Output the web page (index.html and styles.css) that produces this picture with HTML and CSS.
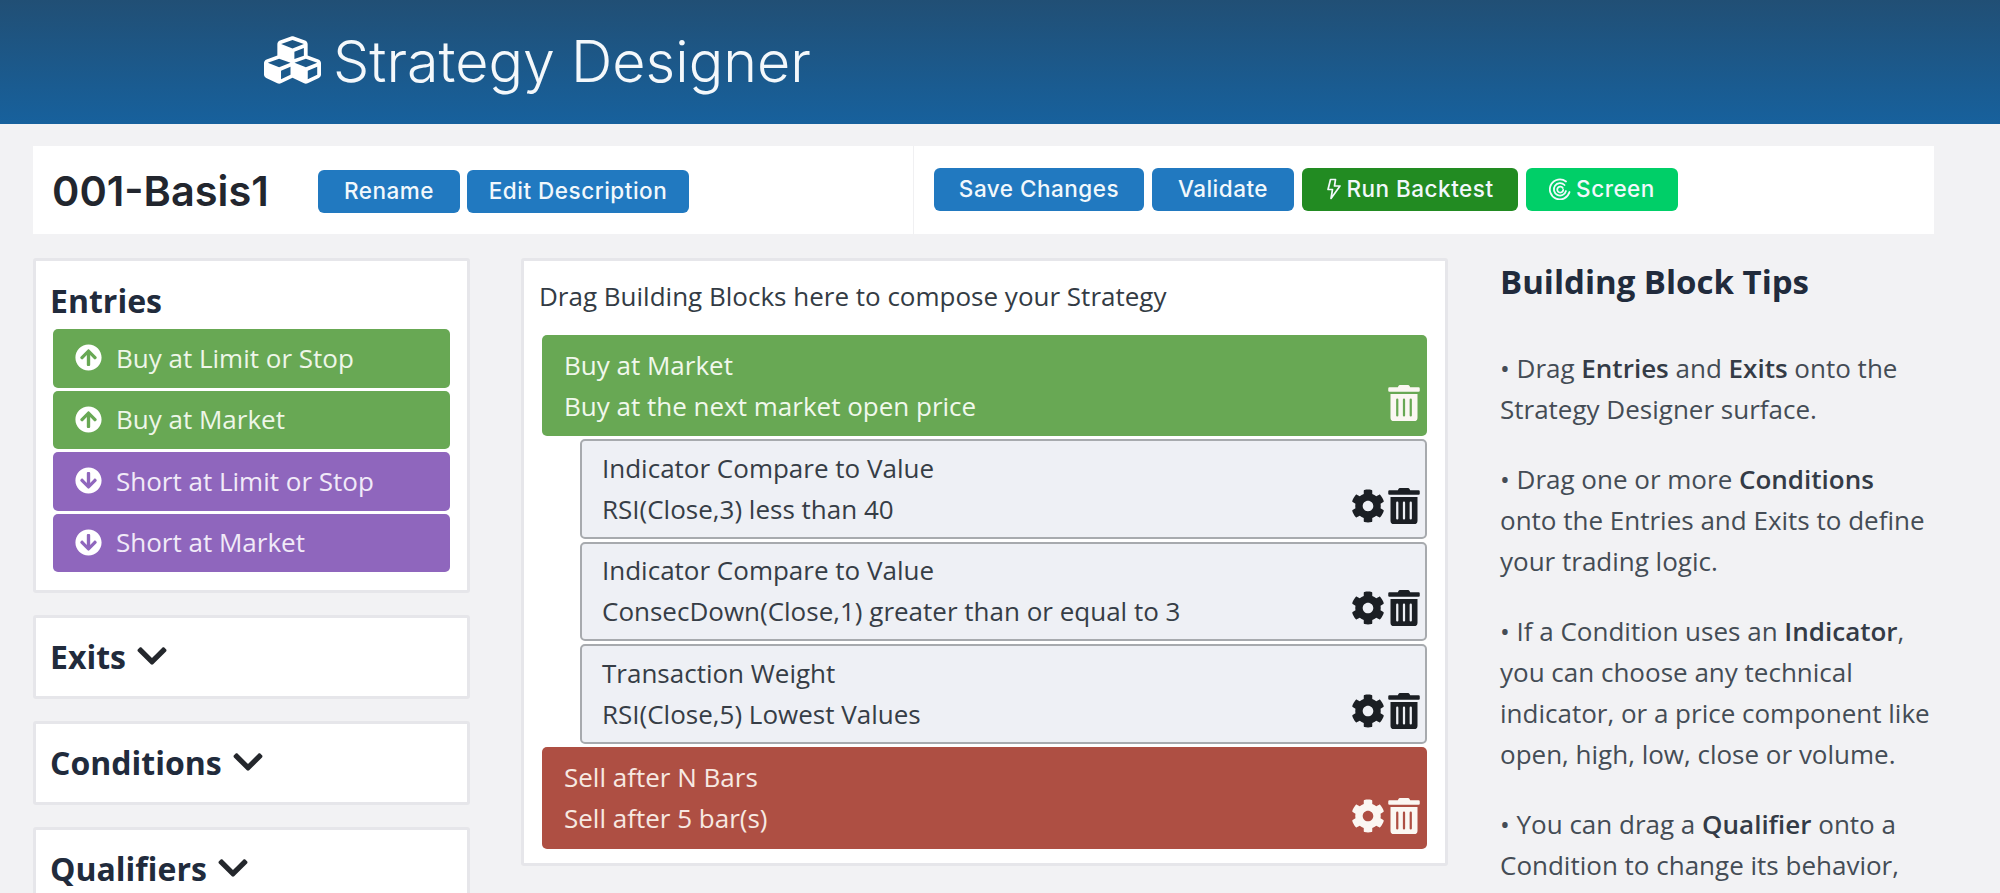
FILE: index.html
```html
<!DOCTYPE html>
<html lang="en">
<head>
<meta charset="utf-8">
<title>Strategy Designer</title>
<link rel="stylesheet" href="styles.css">
</head>
<body>
<svg class="defs" aria-hidden="true">
<symbol id="trash" viewBox="0 0 448 512"><path fill="currentColor" d="M32 464a48 48 0 0 0 48 48h288a48 48 0 0 0 48-48V128H32zm272-256a16 16 0 0 1 32 0v224a16 16 0 0 1-32 0zm-96 0a16 16 0 0 1 32 0v224a16 16 0 0 1-32 0zm-96 0a16 16 0 0 1 32 0v224a16 16 0 0 1-32 0zM432 32H312l-9.4-18.7A24 24 0 0 0 281.1 0H166.8a23.72 23.72 0 0 0-21.4 13.3L136 32H16A16 16 0 0 0 0 48v32a16 16 0 0 0 16 16h416a16 16 0 0 0 16-16V48a16 16 0 0 0-16-16z"/></symbol>
<symbol id="cog" viewBox="0 0 512 512"><path fill="currentColor" d="M487.4 315.7l-42.6-24.6c4.3-23.2 4.3-47 0-70.2l42.6-24.6c4.9-2.8 7.1-8.6 5.5-14-11.1-35.6-30-67.8-54.7-94.6-3.8-4.1-10-5.1-14.8-2.3L380.8 110c-17.9-15.4-38.5-27.3-60.8-35.1V25.8c0-5.6-3.9-10.5-9.4-11.7-36.7-8.2-74.3-7.8-109.2 0-5.5 1.2-9.4 6.1-9.4 11.7V75c-22.2 7.9-42.8 19.8-60.8 35.1L88.7 85.5c-4.9-2.8-11-1.9-14.8 2.3-24.7 26.7-43.6 58.9-54.7 94.6-1.7 5.4.6 11.2 5.5 14L67.3 221c-4.3 23.2-4.3 47 0 70.2l-42.6 24.6c-4.9 2.8-7.1 8.6-5.5 14 11.1 35.6 30 67.8 54.7 94.6 3.8 4.1 10 5.1 14.8 2.3l42.6-24.6c17.9 15.4 38.5 27.3 60.8 35.1v49.2c0 5.6 3.9 10.5 9.4 11.7 36.7 8.2 74.3 7.8 109.2 0 5.5-1.2 9.4-6.1 9.4-11.7v-49.2c22.2-7.9 42.8-19.8 60.8-35.1l42.6 24.6c4.9 2.8 11 1.9 14.8-2.3 24.7-26.7 43.6-58.9 54.7-94.6 1.5-5.5-.7-11.3-5.6-14.1zM256 336c-44.1 0-80-35.9-80-80s35.9-80 80-80 80 35.9 80 80-35.9 80-80 80z"/></symbol>
<symbol id="up" viewBox="0 0 512 512"><path fill="currentColor" d="M8 256C8 119 119 8 256 8s248 111 248 248-111 248-248 248S8 393 8 256zm143.6 28.9l72.4-75.5V392c0 13.3 10.7 24 24 24h16c13.3 0 24-10.7 24-24V209.4l72.4 75.5c9.3 9.7 24.8 9.9 34.3.4l10.9-11c9.4-9.4 9.4-24.6 0-33.9L273 107.7c-9.4-9.4-24.6-9.4-33.9 0L106.3 240.4c-9.4 9.4-9.4 24.6 0 33.9l10.9 11c9.6 9.5 25.1 9.3 34.4-.4z"/></symbol>
<symbol id="chev" viewBox="0 0 448 512"><path fill="currentColor" d="M207.029 381.476L12.686 187.132c-9.373-9.373-9.373-24.569 0-33.941l22.667-22.667c9.357-9.357 24.522-9.375 33.901-.04L224 284.505l154.745-154.021c9.379-9.335 24.544-9.317 33.901.04l22.667 22.667c9.373 9.373 9.373 24.569 0 33.941L240.971 381.476c-9.373 9.372-24.569 9.372-33.942 0z"/></symbol>
</svg>

<header class="masthead">
  <svg class="logo" viewBox="0 0 512 512" preserveAspectRatio="none"><path fill="currentColor" d="M488.6 250.2L392 214V105.5c0-15-9.3-28.4-23.4-33.7l-100-37.5c-8.1-3.1-17.1-3.1-25.3 0l-100 37.5c-14.1 5.3-23.4 18.7-23.4 33.7V214l-96.6 36.2C9.3 255.5 0 268.9 0 283.9V394c0 13.6 7.7 26.1 19.9 32.2l100 50c10.1 5.1 22.1 5.1 32.2 0l103.9-52 103.9 52c10.1 5.1 22.1 5.1 32.2 0l100-50c12.2-6.1 19.9-18.6 19.9-32.2V283.9c0-15-9.3-28.4-23.4-33.7zM358 214.8l-85 31.9v-68.2l85-37v73.3zM154 104.1l102-38.2 102 38.2v.6l-102 41.4-102-41.4v-.6zm84 291.1l-85 42.5v-79.1l85-38.8v75.4zm0-112l-102 41.4-102-41.4v-.6l102-38.2 102 38.2v.6zm240 112l-85 42.5v-79.1l85-38.8v75.4zm0-112l-102 41.4-102-41.4v-.6l102-38.2 102 38.2v.6z"/></svg>
  <h1 class="app-title">Strategy Designer</h1>
</header>

<main class="page">
  <section class="toolbar">
    <div class="toolbar-left">
      <h2 class="strategy-name">001-Basis1</h2>
      <div class="btn-row">
        <button class="btn btn-blue btn-rename">Rename</button>
        <button class="btn btn-blue btn-edit">Edit Description</button>
      </div>
    </div>
    <div class="toolbar-right">
      <button class="btn btn-blue btn-save">Save Changes</button>
      <button class="btn btn-blue btn-validate">Validate</button>
      <button class="btn btn-dark-green btn-run"><svg class="btn-icon" viewBox="0 0 16 22"><path d="M9.5 1.5H4.5L2 11.5h4.5L5 20.5 14 8H8.5z" fill="none" stroke="currentColor" stroke-width="1.7" stroke-linejoin="round"/></svg>Run Backtest</button>
      <button class="btn btn-bright-green btn-screen"><svg class="btn-icon btn-icon-screen" viewBox="0 0 22 22"><g fill="none" stroke="currentColor" stroke-width="1.8" stroke-linecap="round"><path d="M17 3.5A10 10 0 1 0 20.5 14"/><path d="M15.5 7A6.2 6.2 0 1 0 17 13"/><path d="M13.8 10A3 3 0 1 0 14.2 12"/></g></svg>Screen</button>
    </div>
  </section>

  <div class="workspace">
    <aside class="palette">
      <section class="card card-entries">
        <h3 class="card-title">Entries</h3>
        <ul class="block-list">
          <li class="block-item green"><svg class="item-icon"><use href="#up"/></svg>Buy at Limit or Stop</li>
          <li class="block-item green"><svg class="item-icon"><use href="#up"/></svg>Buy at Market</li>
          <li class="block-item purple"><svg class="item-icon flip"><use href="#up"/></svg>Short at Limit or Stop</li>
          <li class="block-item purple"><svg class="item-icon flip"><use href="#up"/></svg>Short at Market</li>
        </ul>
      </section>
      <section class="card card-collapsed"><h3 class="card-title">Exits <svg class="chevron"><use href="#chev"/></svg></h3></section>
      <section class="card card-collapsed"><h3 class="card-title">Conditions <svg class="chevron"><use href="#chev"/></svg></h3></section>
      <section class="card card-collapsed"><h3 class="card-title">Qualifiers <svg class="chevron"><use href="#chev"/></svg></h3></section>
    </aside>

    <section class="canvas">
      <p class="canvas-hint">Drag Building Blocks here to compose your Strategy</p>
      <div class="blocks">
        <article class="block block-entry">
          <div class="block-text"><div>Buy at Market</div><div>Buy at the next market open price</div></div>
          <div class="block-actions"><svg class="trash"><use href="#trash"/></svg></div>
        </article>
        <article class="block block-cond">
          <div class="block-text"><div>Indicator Compare to Value</div><div>RSI(Close,3) less than 40</div></div>
          <div class="block-actions"><svg class="cog"><use href="#cog"/></svg><svg class="trash"><use href="#trash"/></svg></div>
        </article>
        <article class="block block-cond">
          <div class="block-text"><div>Indicator Compare to Value</div><div>ConsecDown(Close,1) greater than or equal to 3</div></div>
          <div class="block-actions"><svg class="cog"><use href="#cog"/></svg><svg class="trash"><use href="#trash"/></svg></div>
        </article>
        <article class="block block-cond">
          <div class="block-text"><div>Transaction Weight</div><div>RSI(Close,5) Lowest Values</div></div>
          <div class="block-actions"><svg class="cog"><use href="#cog"/></svg><svg class="trash"><use href="#trash"/></svg></div>
        </article>
        <article class="block block-exit">
          <div class="block-text"><div>Sell after N Bars</div><div>Sell after 5 bar(s)</div></div>
          <div class="block-actions"><svg class="cog"><use href="#cog"/></svg><svg class="trash"><use href="#trash"/></svg></div>
        </article>
      </div>
    </section>

    <aside class="tips">
      <h3 class="tips-title">Building Block Tips</h3>
      <p>• Drag <b>Entries</b> and <b>Exits</b> onto the Strategy Designer surface.</p>
      <p>• Drag one or more <b>Conditions</b> onto the Entries and Exits to define your trading logic.</p>
      <p>• If a Condition uses an <b>Indicator</b>, you can choose any technical indicator, or a price component like open, high, low, close or volume.</p>
      <p>• You can drag a <b>Qualifier</b> onto a Condition to change its behavior,</p>
    </aside>
  </div>
</main>
</body>
</html>
```

FILE: styles.css
```css
* { box-sizing: border-box; }
html, body { margin: 0; height: 893px; overflow: hidden; }
body { background: #f2f2f4; color: #212b36; font-family: "Open Sans", "Liberation Sans", sans-serif; font-size: 26px; }
.defs { display: none; }
svg { display: block; flex: none; }

.masthead { height: 124px; background: linear-gradient(#214f75, #17619d); display: flex; align-items: center; padding: 0 0 0 264px; color: #fff; }
.logo { width: 57px; height: 54px; margin: 0 12px 5px 0; }
.app-title { margin: 0; font-family: "Inter", "Lato", sans-serif; font-weight: 300; font-size: 57.4px; line-height: 1; color: #f4f8fb; white-space: nowrap; }

.page { padding: 22px 0 0 33px; }
.toolbar { width: 1901px; height: 88px; background: #fff; display: flex; }
.toolbar-left { width: 881px; border-right: 1px solid #f0f0f2; display: flex; align-items: center; padding-left: 19px; padding-top: 3px; }
.strategy-name { margin: 0 47px 0 0; width: 219px; font-family: "Inter", "Lato", sans-serif; font-weight: 600; font-size: 41.5px; line-height: 1; color: #22262e; white-space: nowrap; }
.btn-row { display: flex; gap: 7px; }
.toolbar-right { display: flex; gap: 8px; align-items: center; padding: 0 0 1px 20px; }
.btn { height: 43px; border: 0; border-radius: 6px; padding: 0 0 2px; color: #f2f8fc; font-family: "Inter", "Lato", sans-serif; font-weight: 500; font-size: 22.5px; letter-spacing: 0.5px; display: flex; align-items: center; justify-content: center; white-space: nowrap; }
.btn-blue { background: #2179c0; }
.btn-dark-green { background: #228b22; }
.btn-bright-green { background: #00cf68; }
.btn-rename { width: 142px; }
.btn-edit { width: 222px; }
.btn-save { width: 210px; }
.btn-validate { width: 142px; }
.btn-run { width: 216px; }
.btn-screen { width: 152px; }
.btn-icon { width: 16px; height: 22px; margin-right: 4px; }
.btn-icon-screen { width: 22px; margin-right: 5px; }

.workspace { display: flex; align-items: flex-start; margin-top: 24px; }
.palette { width: 437px; margin-right: 51px; display: flex; flex-direction: column; gap: 22px; }
.card { background: #fff; border: 3px solid #e6e6ea; border-radius: 3px; padding: 0 16px 0 14px; }
.card-entries { height: 335px; padding-top: 20px; }
.card-collapsed { height: 84px; padding-top: 19px; }
.card-title { margin: 0; font-size: 32px; font-weight: 700; line-height: 40px; color: #212b3c; display: flex; align-items: center; gap: 11px; white-space: nowrap; }
.chevron { width: 30px; height: 34px; margin-top: -2px; color: #24272c; }
.block-list { list-style: none; margin: 8px 0 0 3px; padding: 0; display: flex; flex-direction: column; gap: 3px; }
.block-item { width: 397px; height: 58.5px; border-radius: 5px; display: flex; align-items: center; padding-left: 22px; padding-bottom: 1px; color: #eef6e8; font-size: 26px; }
.green { background: #68a854; }
.purple { background: #8f66bd; color: #f1eaf8; }
.item-icon { width: 27px; height: 27px; margin-right: 14px; color: #fff; }
.flip { transform: rotate(180deg); }

.canvas { width: 927px; height: 608px; background: #fff; border: 3px solid #e6e6ea; border-radius: 3px; padding: 0 18px 0 18px; }
.canvas-hint { margin: 0 0 0 -3px; padding-top: 15px; height: 74px; font-size: 26px; line-height: 40px; color: #333b44; white-space: nowrap; }
.blocks { display: flex; flex-direction: column; gap: 3px; }
.block { height: 101px; border-radius: 5px; display: flex; justify-content: space-between; align-items: center; font-size: 26px; line-height: 41px; padding: 0 7px 0 22px; white-space: nowrap; }
.block-entry { background: #68a854; color: #f1f8ec; }
.block-cond { margin-left: 38px; height: 99.5px; background: #eef0f5; color: #363d46; border: 2px solid #a7aaae; padding: 0 5px 0 20px; }
.block-exit { background: #ae4f43; color: #f7e9e2; height: 102px; }
.block-actions { display: flex; gap: 3px; align-items: center; align-self: flex-end; margin-bottom: 15px; }
.block-cond .block-actions { margin-bottom: 13px; color: #1b1f24; }
.trash { width: 32px; height: 36px; color: inherit; }
.cog { width: 34px; height: 34px; }
.block-entry .block-actions, .block-exit .block-actions { color: #fbf7f2; }

.tips { width: 432px; margin-left: 52px; padding-top: 4px; font-size: 26px; line-height: 41px; color: #444c55; }
.tips-title { margin: 0 0 46px; font-size: 33px; line-height: 40px; font-weight: 700; color: #212b3c; white-space: nowrap; }
.tips p { margin: 0 0 29px; }
.tips b { font-weight: 600; color: #343b46; }
```
